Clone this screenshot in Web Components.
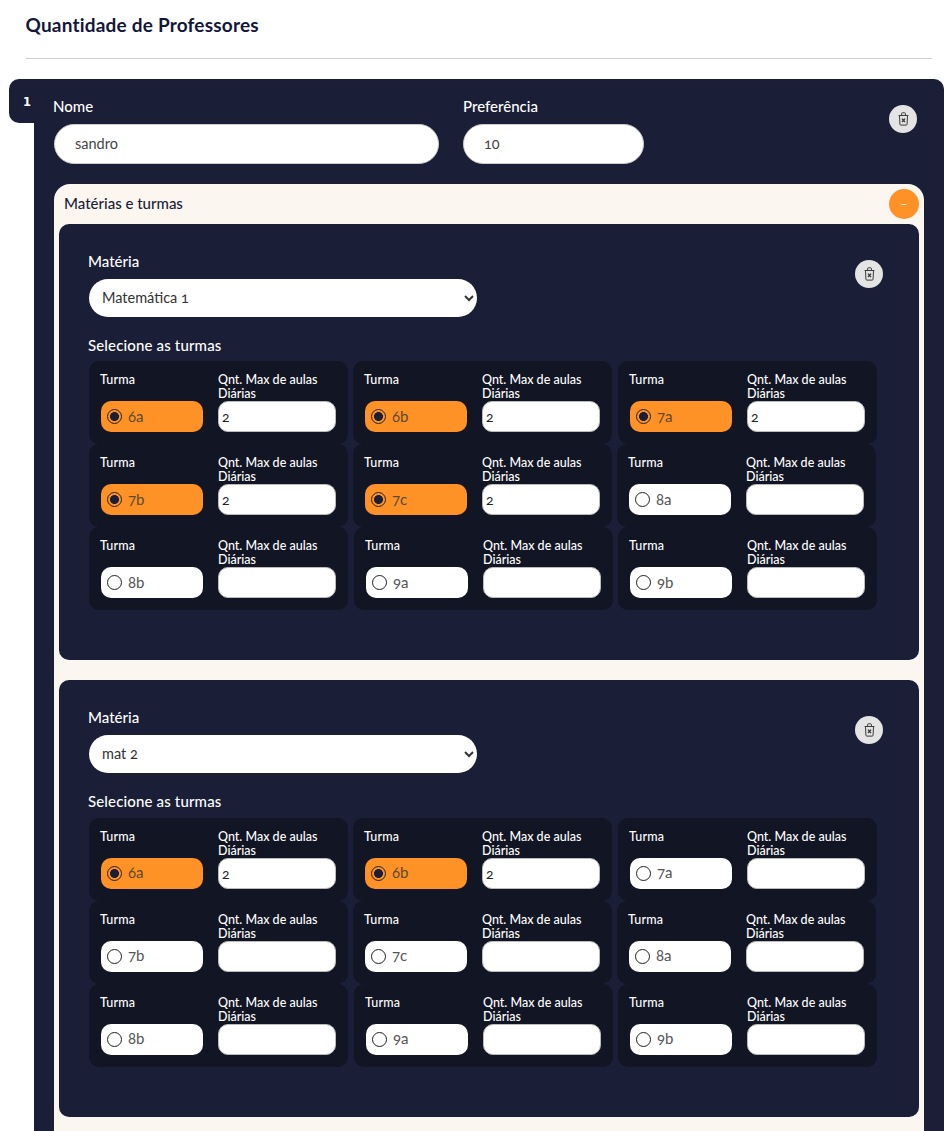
<!DOCTYPE html>
<html lang="pt"><head><meta charset="utf-8"><title>Quantidade de Professores</title>
<style>
html,body{margin:0;padding:0;height:1131px;overflow:hidden;background:#fff;font-family:Lato,"Liberation Sans",sans-serif}
</style></head><body>
<page-header></page-header>
<teacher-card index="1" name="sandro" pref="10">
  <subject-card subject="Matemática 1" checked="6a,6b,7a,7b,7c"></subject-card>
  <subject-card subject="mat 2" checked="6a,6b"></subject-card>
</teacher-card>
<script>
const FONT='Lato,"Liberation Sans",sans-serif';
const NAVY='#1a1e37';
const TRASH=`<svg width="11" height="14" viewBox="0 0 11 14" fill="none" stroke="#3c3c3c" stroke-width="1"><path d="M.6 3.5h9.8M1.5 3.5l.4 8.6a1 1 0 0 0 1 1h5.2a1 1 0 0 0 1-1l.4-8.6M3.6 3.3V1.5a.7.7 0 0 1 .7-.7h2.4a.7.7 0 0 1 .7.7v1.8"/><path d="M4 6.6l3 3.4M7 6.6L4 10" stroke-width="1.4"/></svg>`;
class PageHeader extends HTMLElement{constructor(){super();this.attachShadow({mode:'open'}).innerHTML=`<style>
:host{display:block;padding:14px 19px 20px 26px}
h1{margin:0;font:700 19px/22px ${FONT};color:#14163a;letter-spacing:.2px;margin-left:-.5px}
hr{margin:22px 0 0;border:0;border-top:1px solid #ccc}
</style><h1>Quantidade de Professores</h1><hr>`}}
class TrashButton extends HTMLElement{constructor(){super();this.attachShadow({mode:'open'}).innerHTML=`<style>
:host{display:flex;width:28px;height:28px;border-radius:50%;background:#e4e4e4;align-items:center;justify-content:center}
svg{display:block}</style>${TRASH}`}}
class TeacherCard extends HTMLElement{constructor(){super();const a=n=>this.getAttribute(n);this.attachShadow({mode:'open'}).innerHTML=`<style>
:host{display:block;position:relative;margin:0 7px 0 34px;background:${NAVY};border-radius:0 10px 0 0;padding:15px 20px 40px;color:#fff}
.tab{position:absolute;left:-25px;top:0;width:25px;height:44px;background:${NAVY};border-radius:10px 0 0 10px;box-sizing:border-box;padding:15px 0 0 14px;font:700 11.5px/16px "DejaVu Sans",sans-serif}
.fields{display:flex;gap:24px;align-items:flex-start;position:relative;height:90px}
.field label{display:block;font:500 15px/24px ${FONT};margin:0 0 6px}
.field:first-child label{margin-left:-1px}
input{display:block;box-sizing:border-box;height:40px;border:1px solid #ccc;border-radius:20px;background:#fff;font:400 14.5px ${FONT};color:#444;padding:0 20px 2px;outline:0;font-variant-numeric:oldstyle-nums}
.n{width:385px}.p{width:181px}
trash-button{position:absolute;right:7px;top:11px}
.panel{background:#fcf6f1;border-radius:16px 16px 0 0;padding:0 5px}
.head{display:flex;justify-content:space-between;align-items:center;height:40px;color:${NAVY};font:500 15px ${FONT};padding-left:5px}
.head span{margin-bottom:3px}
.head button{all:unset;width:30px;height:30px;border-radius:50%;background:#ff9226;color:#fff;text-align:center;font:400 12px/30px ${FONT};margin-top:-1px}
.list{display:flex;flex-direction:column;gap:20px;padding-bottom:20px}
</style><div class="tab">${a('index')}</div>
<div class="fields"><div class="field"><label>Nome</label><input class="n" value="${a('name')}"></div>
<div class="field"><label>Preferência</label><input class="p" value="${a('pref')}"></div><trash-button></trash-button></div>
<div class="panel"><div class="head"><span>Matérias e turmas</span><button>–</button></div><div class="list"><slot></slot></div></div>`}}
const ROWS=[['6a','6b','7a'],['7b','7c','8a'],['8b','9a','9b']];
const GAPS=[[0,5,6],[0,5,5],[0,6,5]];
class SubjectCard extends HTMLElement{constructor(){super();const c=this.getAttribute('checked').split(',');
const rows=ROWS.map((r,i)=>`<div class="row">${r.map((t,j)=>`<class-cell style="margin-left:${GAPS[i][j]}px" turma="${t}" ${c.includes(t)?'on':''}></class-cell>`).join('')}</div>`).join('');
this.attachShadow({mode:'open'}).innerHTML=`<style>
:host{display:block;box-sizing:border-box;height:436.4px;background:${NAVY};border-radius:10px;padding:25px 30px;color:#fff;position:relative}
label{display:block;font:500 15px/24px ${FONT};margin-left:-1px}
select{display:block;box-sizing:border-box;width:388px;height:38px;margin:6px 0 0;border:0;border-radius:19px;background:#fff;font:400 14.5px ${FONT};color:#333;padding:0 9px 2px;outline:0;font-variant-numeric:oldstyle-nums}
trash-button{position:absolute;left:796px;top:36px}
h3{margin:15px 0 3.4px -1px;font:500 15px/26px ${FONT};letter-spacing:.15px}
.row{display:flex}
</style><label>Matéria</label><select><option>${this.getAttribute('subject')}</option></select><trash-button></trash-button>
<h3>Selecione as turmas</h3><div class="grid">${rows}</div>`}}
class ClassCell extends HTMLElement{constructor(){super();const t=this.getAttribute('turma'),on=this.hasAttribute('on');this.attachShadow({mode:'open'}).innerHTML=`<style>
:host{display:grid;box-sizing:border-box;width:259px;height:83px;background:#121524;border-radius:10px;padding:12px 12px 0;grid-template-columns:102px 118px;column-gap:15px;grid-template-rows:28px 31px;color:#fff}
.l{font:500 12.5px/14px ${FONT}}
.t{margin-left:-1px;letter-spacing:.2px}
.r{display:flex;align-items:center;gap:6px;box-sizing:border-box;padding:0 0 0 6px;border-radius:10px;background:${on?'#ff9226':'#fff'};color:${on?'#5c4a33':'#555'};font:400 15px ${FONT};font-variant-numeric:oldstyle-nums}
.r span{margin-top:-2px}
.r i{display:block;box-sizing:border-box;width:15px;height:15px;border-radius:50%;border:1.2px solid #222;${on?`background:radial-gradient(circle,${NAVY} 0 4.2px,transparent 4.7px)`:''}}
input{box-sizing:border-box;width:118px;height:31px;border:1px solid #bbb;border-radius:10px;background:#fff;font:400 14px ${FONT};color:#222;padding:0 3px;outline:0;font-variant-numeric:oldstyle-nums}
</style><div class="l t">Turma</div><div class="l">Qnt. Max de aulas Diárias</div>
<div class="r"><i></i><span>${t}</span></div><input value="${on?'2':''}">`}}
customElements.define('page-header',PageHeader);customElements.define('trash-button',TrashButton);customElements.define('teacher-card',TeacherCard);customElements.define('subject-card',SubjectCard);customElements.define('class-cell',ClassCell);
</script></body></html>
